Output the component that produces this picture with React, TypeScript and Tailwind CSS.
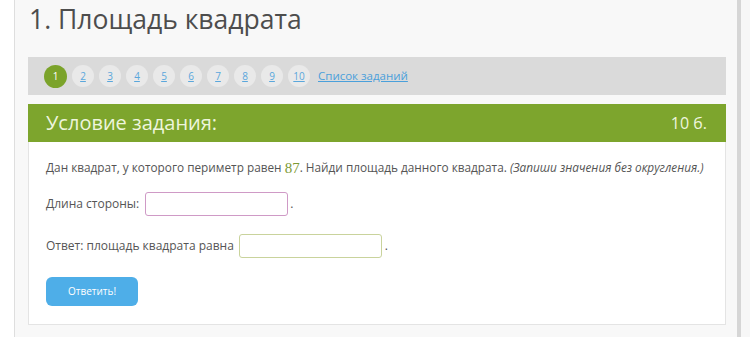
import React from "react";

export default function App() {
  const nums = [1, 2, 3, 4, 5, 6, 7, 8, 9, 10];
  return (
    <div
      className="w-[750px] h-[337px] bg-white flex overflow-hidden text-[#555]"
      style={{ fontFamily: '"Open Sans", "Noto Sans", sans-serif' }}
    >
      <div className="w-[15px] shrink-0 bg-white border-r border-[#dedede]" />
      <div className="w-[722px] shrink-0 bg-[#f8f8f8] pl-[13px] pr-[11px] flex flex-col">
        <div className="h-[57px] flex items-start">
          <h1 className="text-[26.5px] leading-[34px] mt-[2px] ml-[1px] text-[#4d4d4d] font-normal">
            1. Площадь квадрата
          </h1>
        </div>
        <div className="h-[38px] bg-[#dadada] flex items-center pl-[16px] gap-[5px]">
          {nums.map((n) =>
            n === 1 ? (
              <span
                key={n}
                className="w-[23px] h-[23px] rounded-full bg-[#7ba32a] text-white text-[10px] flex items-center justify-center"
              >
                {n}
              </span>
            ) : (
              <span
                key={n}
                className="w-[22px] h-[22px] rounded-full bg-[#e9e9e9] text-[#5aa7dc] text-[10px] underline flex items-center justify-center"
              >
                {n}
              </span>
            )
          )}
          <span className="ml-[3px] text-[11.5px] text-[#4aa0db] underline">Список заданий</span>
        </div>
        <div className="h-[9px]" />
        <div className="h-[38px] bg-[#7da52d] flex items-center justify-between pl-[18px] pr-[19px] text-[#eef5dd]">
          <span className="text-[20px]">Условие задания:</span>
          <span className="text-[16px]">10 б.</span>
        </div>
        <div className="h-[183px] bg-white border border-t-0 border-[#e4e4e4] pl-[17px] flex flex-col text-[12px] text-[#555]">
          <p className="mt-[16px] h-[20px] flex items-center whitespace-nowrap text-[11.8px]">
            <span>Дан квадрат, у которого периметр равен&nbsp;</span>
            <span
              className="text-[15px] text-[#7d9a35]"
              style={{ fontFamily: '"Liberation Serif", "DejaVu Serif", serif' }}
            >
              87
            </span>
            <span>. Найди площадь данного квадрата.&nbsp;</span>
            <span className="italic">(Запиши значения без округления.)</span>
          </p>
          <div className="mt-[14px] flex items-center h-[24px]">
            <span>Длина стороны:</span>
            <span className="ml-[6px] w-[143px] h-[24px] rounded-[3px] border border-[#cf9ac6] bg-white" />
            <span className="ml-[2px]">.</span>
          </div>
          <div className="mt-[18px] flex items-center h-[24px]">
            <span>Ответ: площадь квадрата равна</span>
            <span className="ml-[5px] w-[143px] h-[24px] rounded-[3px] border border-[#c9d39c] bg-white" />
            <span className="ml-[3px]">.</span>
          </div>
          <button className="mt-[19px] w-[92px] h-[29px] rounded-[6px] bg-[#4eaee8] text-white text-[10px] flex items-center justify-center">
            Ответить!
          </button>
        </div>
      </div>
      <div className="w-[4px] shrink-0 bg-[#d6d6d6]" />
      <div className="flex-1 bg-[#f7f7f7]" />
    </div>
  );
}
